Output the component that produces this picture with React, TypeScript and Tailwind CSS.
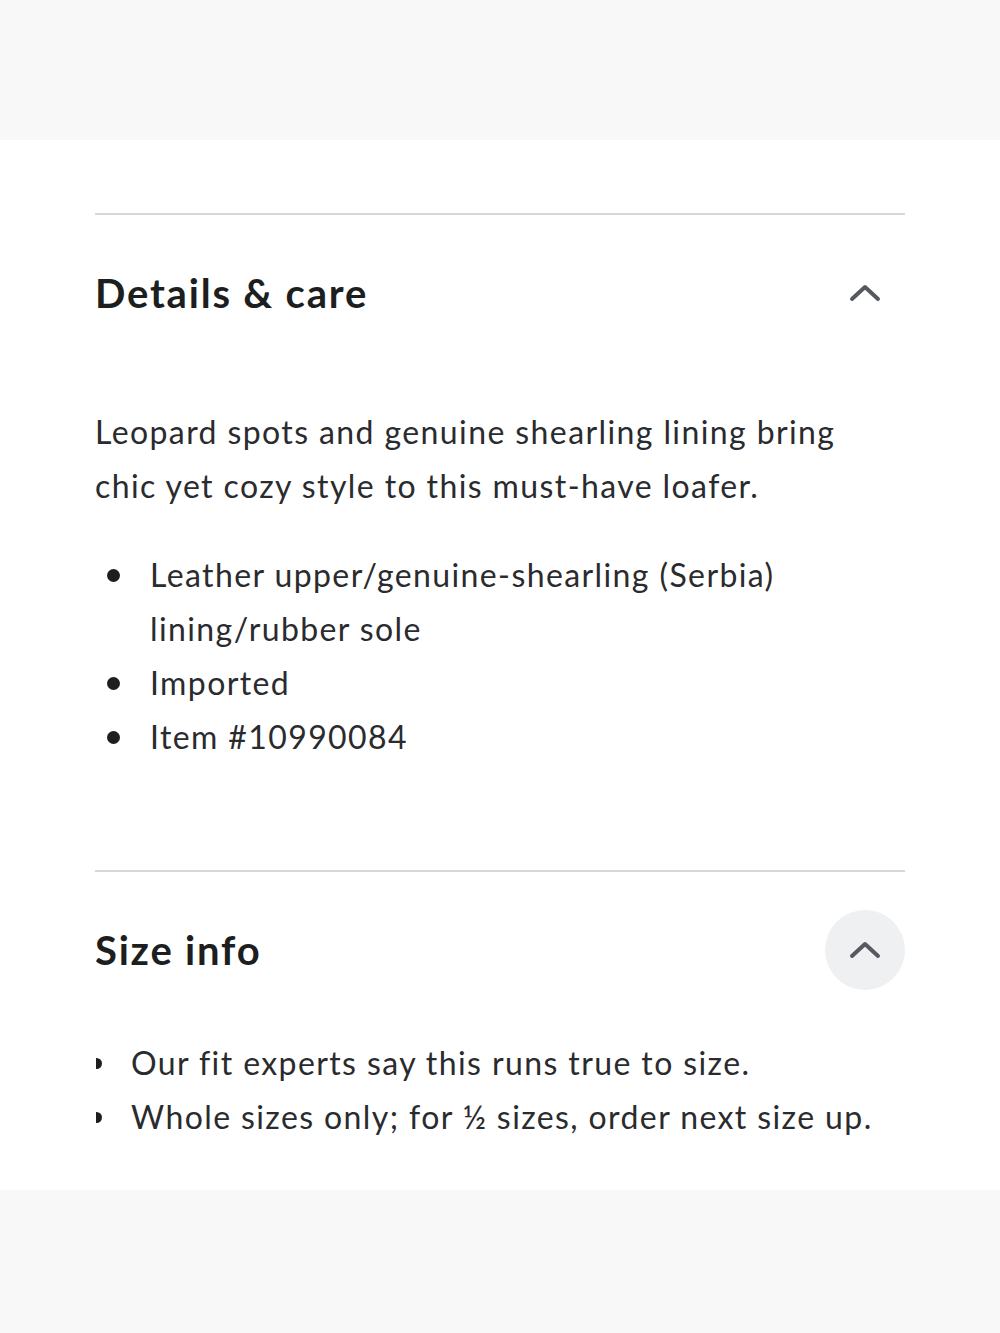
function Chevron() {
    return (
        <svg width="34" height="20" viewBox="0 0 34 20" fill="none">
            <path d="M4 16 L17 4 L30 16" stroke="#56595f" strokeWidth="4" strokeLinecap="round" strokeLinejoin="round" />
        </svg>
    )
}

const details = ["Leather upper/genuine-shearling (Serbia) lining/rubber sole", "Imported", "Item #10990084"]
const sizeNotes = ["Our fit experts say this runs true to size.", "Whole sizes only; for ½ sizes, order next size up."]

export default function App() {
    return (
        <div className="min-h-[1333px] bg-[#f8f8f8] text-[#2a2b2e]" style={{ fontFamily: "Lato, 'Open Sans', sans-serif" }}>
            <div className="h-[140px]" />
            <div className="bg-white h-[1050px] pt-[73px]">
                <div className="mx-[95px] border-t-2 border-[#d6d7d9]">
                    {/* Details & care */}
                    <div className="h-[156px] flex items-center justify-between">
                        <h2 className="text-[40px] font-bold text-[#1d1e20] tracking-[1.8px]">Details &amp; care</h2>
                        <div className="w-[80px] h-[80px] flex items-center justify-center">
                            <Chevron />
                        </div>
                    </div>
                    <p className="mt-[34px] text-[32px] leading-[54px] tracking-[1.4px] pr-[50px]">
                        Leopard spots and genuine shearling lining bring chic yet cozy style to this must-have loafer.
                    </p>
                    <ul className="mt-[35px] text-[32px] leading-[54px] tracking-[1.4px]">
                        {details.map((item) => (
                            <li key={item} className="flex">
                                <span className="w-[55px] shrink-0 flex items-start pt-[21px] pl-[12px]">
                                    <span className="w-[13px] h-[13px] rounded-full bg-[#1d1e20]" />
                                </span>
                                <span className="pr-[90px]">{item}</span>
                            </li>
                        ))}
                    </ul>
                </div>
                <div className="mx-[95px] mt-[106px] border-t-2 border-[#d6d7d9]">
                    {/* Size info */}
                    <div className="h-[156px] flex items-center justify-between">
                        <h2 className="text-[40px] font-bold text-[#1d1e20] tracking-[1.8px]">Size info</h2>
                        <div className="w-[80px] h-[80px] rounded-full bg-[#eff0f2] flex items-center justify-center">
                            <Chevron />
                        </div>
                    </div>
                    <ul className="mt-[8px] text-[32px] leading-[54px] tracking-[1.4px]">
                        {sizeNotes.map((item) => (
                            <li key={item} className="flex">
                                <span className="w-[36px] shrink-0 flex items-start pt-[22px] pl-[1px]">
                                    <span className="w-[6px] h-[11px] rounded-r-full bg-[#1d1e20]" />
                                </span>
                                <span>{item}</span>
                            </li>
                        ))}
                    </ul>
                </div>
            </div>
        </div>
    )
}
